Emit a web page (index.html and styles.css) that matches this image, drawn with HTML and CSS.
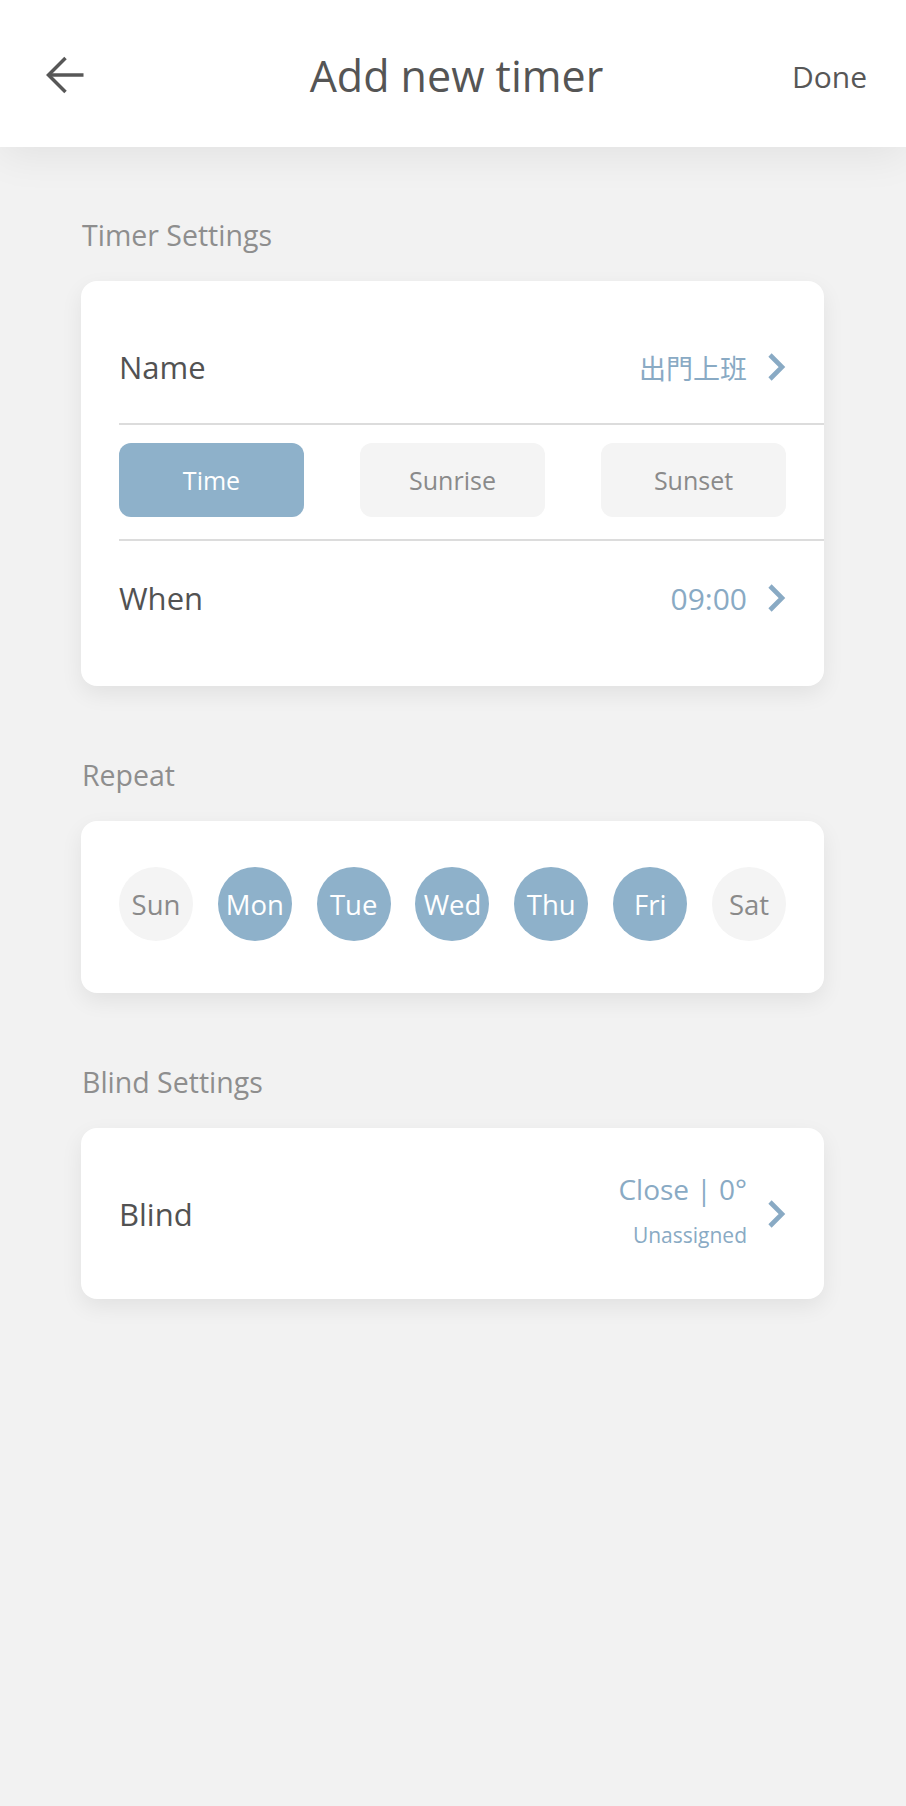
FILE: index.html
```html
<!DOCTYPE html>
<html lang="en">
<head>
<meta charset="utf-8">
<title>Add new timer</title>
<link rel="stylesheet" href="styles.css">
</head>
<body>
<header class="topbar">
  <div class="topbar-left">
    <svg class="back-icon" width="38" height="38" viewBox="0 0 38 38" aria-hidden="true">
      <polyline points="19.5,2 2.5,19 19.5,36" fill="none" stroke="#575757" stroke-width="3.5" stroke-linejoin="miter"/>
      <line x1="3" y1="19" x2="37.5" y2="19" stroke="#575757" stroke-width="3.5"/>
    </svg>
  </div>
  <h1 class="topbar-title">Add new timer</h1>
  <div class="topbar-right"><span class="done">Done</span></div>
</header>

<main class="content">
  <section class="group">
    <h2 class="group-title">Timer Settings</h2>
    <div class="card card-timer">
      <div class="row">
        <span class="row-label">Name</span>
        <span class="row-value">
          <span class="value-text value-cjk">出門上班</span>
          <svg class="chevron" width="20" height="30" viewBox="0 0 20 30" aria-hidden="true"><polyline points="4,3 16,15 4,27" fill="none" stroke="#89aac4" stroke-width="4.6"/></svg>
        </span>
      </div>
      <div class="segment-row">
        <span class="segment segment-active">Time</span>
        <span class="segment">Sunrise</span>
        <span class="segment">Sunset</span>
      </div>
      <div class="row">
        <span class="row-label">When</span>
        <span class="row-value">
          <span class="value-text">09:00</span>
          <svg class="chevron" width="20" height="30" viewBox="0 0 20 30" aria-hidden="true"><polyline points="4,3 16,15 4,27" fill="none" stroke="#89aac4" stroke-width="4.6"/></svg>
        </span>
      </div>
    </div>
  </section>

  <section class="group">
    <h2 class="group-title">Repeat</h2>
    <div class="card card-days">
      <span class="day">Sun</span>
      <span class="day day-on">Mon</span>
      <span class="day day-on">Tue</span>
      <span class="day day-on">Wed</span>
      <span class="day day-on">Thu</span>
      <span class="day day-on">Fri</span>
      <span class="day">Sat</span>
    </div>
  </section>

  <section class="group">
    <h2 class="group-title">Blind Settings</h2>
    <div class="card card-blind">
      <span class="row-label">Blind</span>
      <span class="row-value">
        <span class="blind-value">
          <span class="blind-main">Close | 0°</span>
          <span class="blind-sub">Unassigned</span>
        </span>
        <svg class="chevron" width="20" height="30" viewBox="0 0 20 30" aria-hidden="true"><polyline points="4,3 16,15 4,27" fill="none" stroke="#89aac4" stroke-width="4.6"/></svg>
      </span>
    </div>
  </section>
</main>
</body>
</html>
```

FILE: styles.css
```css
* {
  box-sizing: border-box;
}

html {
  background: #f2f2f2;
}

body {
  margin: 0;
  min-height: 1806px;
  background: #f2f2f2;
  font-family: "Open Sans", "Noto Sans", "Noto Sans CJK TC", sans-serif;
  color: #555555;
}

.topbar {
  position: relative;
  z-index: 2;
  height: 147px;
  padding: 3px 39px 0 46px;
  background: #ffffff;
  display: grid;
  grid-template-columns: 1fr auto 1fr;
  align-items: center;
  box-shadow: 0 8px 40px rgba(0, 0, 0, 0.07);
}

.topbar-left {
  display: flex;
  align-items: center;
}

.back-icon {
  display: block;
}

.topbar-title {
  margin: 0;
  font-size: 43px;
  font-weight: 500;
  color: #555555;
}

.topbar-right {
  display: flex;
  justify-content: flex-end;
}

.done {
  font-size: 30px;
  font-weight: 500;
  color: #575757;
  padding-top: 2px;
}

.content {
  padding: 0 82px 0 81px;
}

.group-title {
  margin: 70px 0 27px 1px;
  font-size: 28.5px;
  line-height: 38px;
  font-weight: 400;
  color: #8e8e8e;
}

.group:first-child .group-title {
  margin-top: 69px;
}

.card {
  background: #ffffff;
  border-radius: 16px;
  box-shadow: 0 8px 22px rgba(0, 0, 0, 0.07);
}

.card-timer {
  padding: 30px 0 31px 38px;
}

.row {
  height: 112px;
  padding-right: 38px;
  display: flex;
  align-items: center;
  justify-content: space-between;
}

.row-label {
  font-size: 31px;
  font-weight: 500;
  color: #525252;
}

.row-value {
  display: flex;
  align-items: center;
  gap: 19px;
}

.value-text {
  font-size: 30px;
  color: #89aac4;
}

.value-cjk {
  font-family: "Noto Sans CJK TC", "Noto Sans", sans-serif;
  font-size: 27px;
}

.chevron {
  display: block;
}

.segment-row {
  border-top: 2px solid #dcdcdc;
  border-bottom: 2px solid #dcdcdc;
  padding: 18px 38px 22px 0;
  display: flex;
  justify-content: space-between;
}

.segment-row + .row {
  height: 114px;
}

.segment {
  width: 185px;
  height: 74px;
  border-radius: 12px;
  background: #f4f4f4;
  color: #8a8a8a;
  font-size: 25px;
  display: flex;
  align-items: center;
  justify-content: center;
}

.segment-active {
  background: #8eb1ca;
  color: #ffffff;
}

.card-days {
  padding: 46px 38px 52px 38px;
  display: flex;
  justify-content: space-between;
}

.day {
  width: 74px;
  height: 74px;
  border-radius: 50%;
  background: #f4f4f4;
  color: #8a8a8a;
  font-size: 27.5px;
  font-weight: 500;
  display: flex;
  align-items: center;
  justify-content: center;
}

.day-on {
  background: #8eb1ca;
  color: #ffffff;
}

.card-blind {
  height: 171px;
  padding: 0 38px;
  display: flex;
  align-items: center;
  justify-content: space-between;
}

.blind-value {
  display: flex;
  flex-direction: column;
  align-items: flex-end;
  padding-bottom: 6px;
}

.blind-main {
  font-size: 28px;
  line-height: 34px;
  color: #89aac4;
}

.blind-sub {
  margin-top: 15px;
  font-size: 21px;
  line-height: 28px;
  color: #89aac4;
}
```
